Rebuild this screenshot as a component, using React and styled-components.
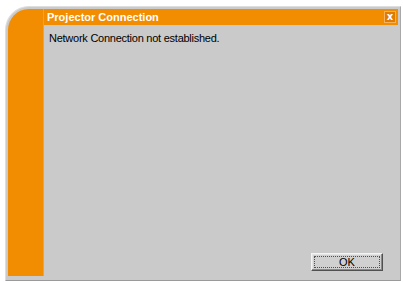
import React from 'react';
import styled, { createGlobalStyle } from 'styled-components';

const GlobalStyle = createGlobalStyle`
  html, body {
    margin: 0;
    padding: 0;
    background: #ffffff;
  }
  body {
    font-family: "Liberation Sans", "DejaVu Sans", sans-serif;
  }
`;

const Page = styled.div`
  width: 403px;
  height: 282px;
  padding: 6px 2px 1px 5px;
  box-sizing: border-box;
`;

const Window = styled.div`
  width: 100%;
  height: 100%;
  box-sizing: border-box;
  background: #cacaca;
  border: 1px solid #dedede;
  border-right-color: #a8a8a8;
  border-bottom-color: #9a9a9a;
  border-top-left-radius: 24px;
  padding: 2px 2px 4px 2px;
  display: grid;
  grid-template-columns: 36px 1fr;
  grid-template-rows: 16px 1fr;
`;

const Sidebar = styled.div`
  grid-column: 1;
  grid-row: 1 / span 2;
  background: #f28c00;
  border-top-left-radius: 21px;
  box-shadow: inset -1px 0 0 #f5a030;
`;

const TitleBar = styled.div`
  grid-column: 2;
  grid-row: 1;
  background: #f28c00;
  display: flex;
  align-items: center;
  justify-content: space-between;
  padding: 0 2px 0 3px;
`;

const Title = styled.span`
  color: #ffffff;
  font-size: 11px;
  font-weight: bold;
`;

const CloseButton = styled.div`
  width: 10px;
  height: 10px;
  background: #e07a00;
  border: 1px solid #f6b25a;
  color: #ffffff;
  font-family: "DejaVu Sans", sans-serif;
  font-size: 10px;
  font-weight: bold;
  line-height: 9px;
  text-align: center;
`;

const Content = styled.div`
  grid-column: 2;
  grid-row: 2;
  display: flex;
  flex-direction: column;
  padding: 7px 15px 5px 5px;
`;

const Message = styled.p`
  margin: 0;
  font-size: 11px;
  letter-spacing: -0.25px;
  color: #000000;
`;

const Button = styled.button`
  margin-top: auto;
  align-self: flex-end;
  width: 72px;
  height: 18px;
  padding: 0;
  background: #d0d0d0;
  border: 1px solid;
  border-color: #f4f4f4 #505050 #505050 #f4f4f4;
  box-shadow: inset -1px -1px 0 #8a8a8a, inset 1px 1px 0 #e4e4e4;
  font-family: "Liberation Sans", "DejaVu Sans", sans-serif;
  font-size: 11px;
  color: #000000;
  display: flex;
  align-items: center;
  justify-content: center;
`;

const FocusRing = styled.span`
  flex: 1;
  margin: 2px;
  align-self: stretch;
  border: 1px dotted #505050;
  display: flex;
  align-items: center;
  justify-content: center;
`;

export default function App() {
  return (
    <>
      <GlobalStyle />
      <Page>
        <Window>
          <Sidebar />
          <TitleBar>
            <Title>Projector Connection</Title>
            <CloseButton>x</CloseButton>
          </TitleBar>
          <Content>
            <Message>Network Connection not established.</Message>
            <Button>
              <FocusRing>OK</FocusRing>
            </Button>
          </Content>
        </Window>
      </Page>
    </>
  );
}
